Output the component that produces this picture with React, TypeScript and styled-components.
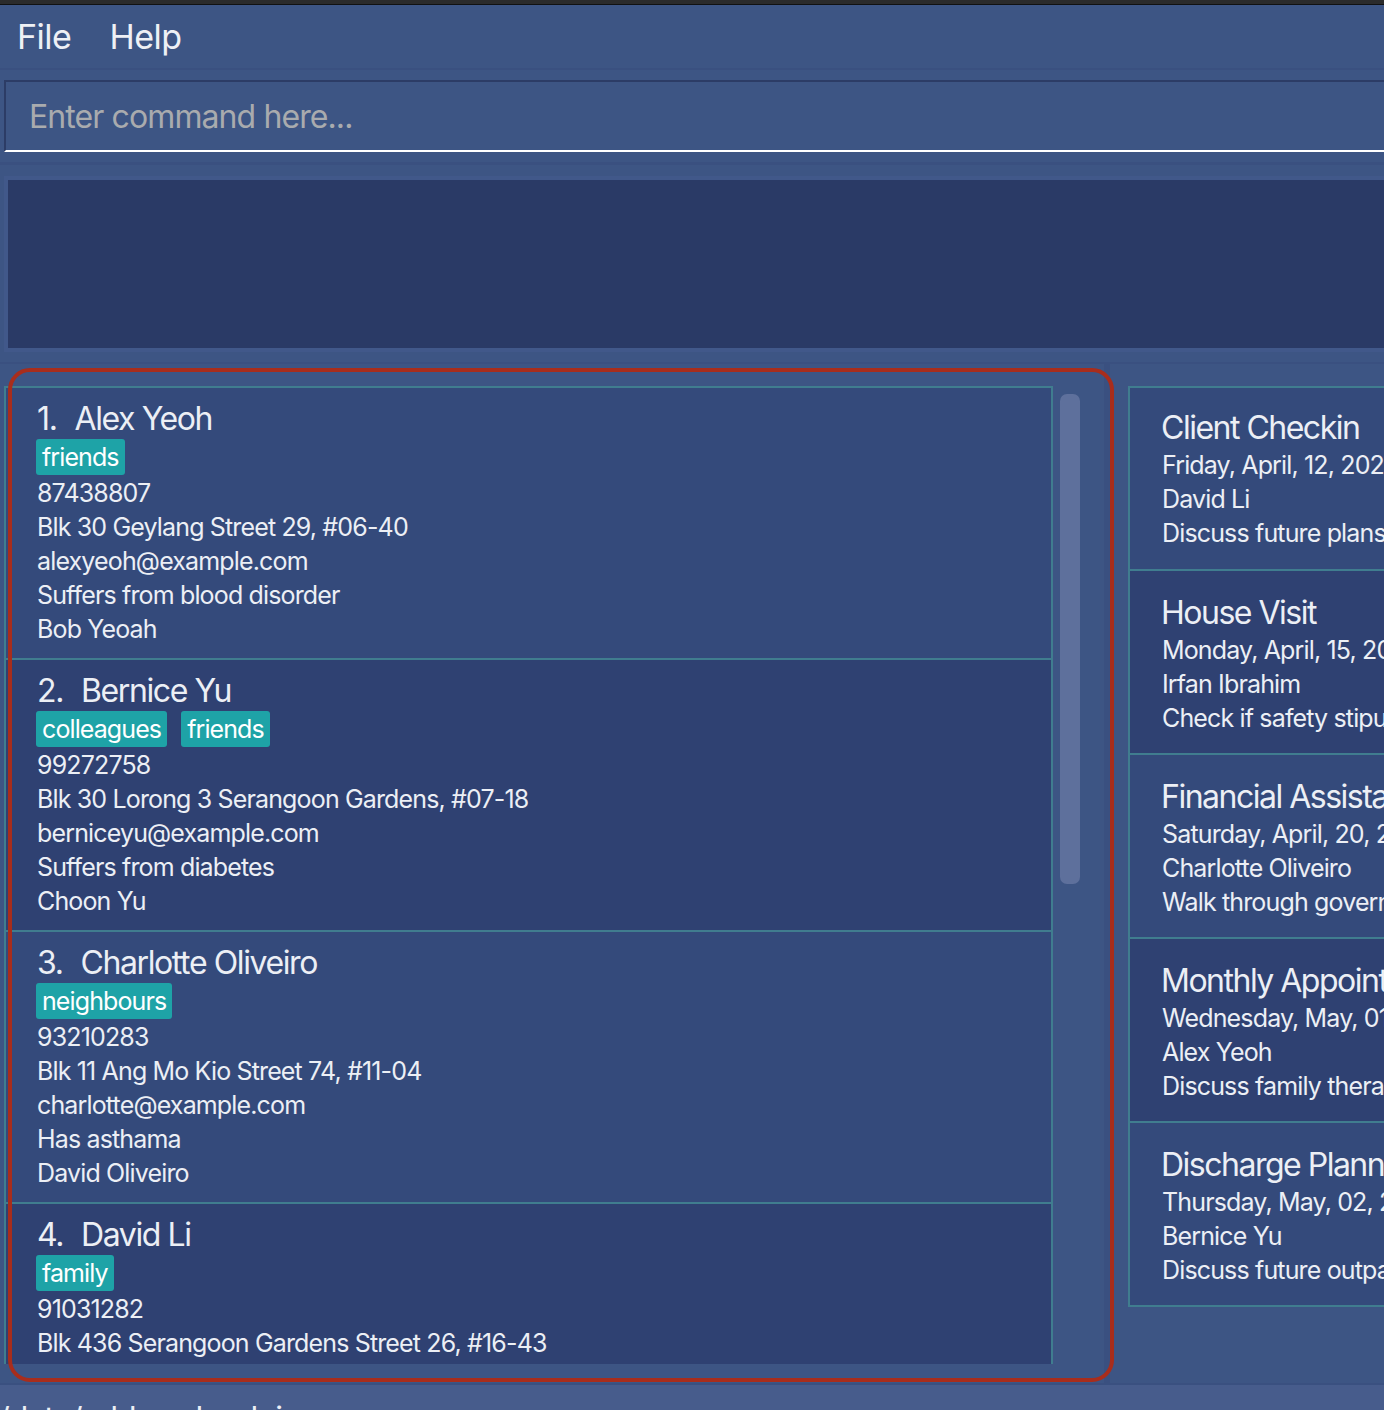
import styled, { createGlobalStyle } from 'styled-components';

const GlobalStyle = createGlobalStyle`
  html, body {
    margin: 0;
    padding: 0;
    width: 1384px;
    height: 1410px;
    overflow: hidden;
    background: #3d5584;
  }
  * { box-sizing: border-box; }
`;

type Person = {
  id: number;
  name: string;
  tags: string[];
  phone: string;
  address: string;
  email: string;
  note: string;
  contact: string;
};

type Appointment = {
  title: string;
  date: string;
  person: string;
  description: string;
};

const persons: Person[] = [
  { id: 1, name: 'Alex Yeoh', tags: ['friends'], phone: '87438807', address: 'Blk 30 Geylang Street 29, #06-40', email: 'alexyeoh@example.com', note: 'Suffers from blood disorder', contact: 'Bob Yeoah' },
  { id: 2, name: 'Bernice Yu', tags: ['colleagues', 'friends'], phone: '99272758', address: 'Blk 30 Lorong 3 Serangoon Gardens, #07-18', email: 'berniceyu@example.com', note: 'Suffers from diabetes', contact: 'Choon Yu' },
  { id: 3, name: 'Charlotte Oliveiro', tags: ['neighbours'], phone: '93210283', address: 'Blk 11 Ang Mo Kio Street 74, #11-04', email: 'charlotte@example.com', note: 'Has asthama', contact: 'David Oliveiro' },
  { id: 4, name: 'David Li', tags: ['family'], phone: '91031282', address: 'Blk 436 Serangoon Gardens Street 26, #16-43', email: 'lidavid@example.com', note: 'Has high blood pressure', contact: 'Alex Yeoh' },
];

const appointments: Appointment[] = [
  { title: 'Client Checkin', date: 'Friday, April, 12, 2024', person: 'David Li', description: 'Discuss future plans' },
  { title: 'House Visit', date: 'Monday, April, 15, 2024', person: 'Irfan Ibrahim', description: 'Check if safety stipulations are met' },
  { title: 'Financial Assistance', date: 'Saturday, April, 20, 2024', person: 'Charlotte Oliveiro', description: 'Walk through government schemes' },
  { title: 'Monthly Appointment', date: 'Wednesday, May, 01, 2024', person: 'Alex Yeoh', description: 'Discuss family therapy' },
  { title: 'Discharge Planning', date: 'Thursday, May, 02, 2024', person: 'Bernice Yu', description: 'Discuss future outpatient care' },
];

function App() {
  return (
    <>
      <GlobalStyle />
      <Window>
        <TopStrip />
        <MenuBar>
          <MenuItem>File</MenuItem>
          <MenuItem>Help</MenuItem>
        </MenuBar>
        <CommandArea>
          <CommandInput placeholder="Enter command here..." />
        </CommandArea>
        <ResultArea>
          <ResultPane />
        </ResultArea>
        <MainSplit>
          <PersonPanel>
            <PersonViewport>
              {persons.map((p) => (
                <PersonCard key={p.id} $odd={p.id % 2 === 1}>
                  <NameRow>
                    <span>{p.id}.</span>
                    <span>{p.name}</span>
                  </NameRow>
                  <TagRow>
                    {p.tags.map((t) => (
                      <Tag key={t}>{t}</Tag>
                    ))}
                  </TagRow>
                  <Detail>{p.phone}</Detail>
                  <Detail>{p.address}</Detail>
                  <Detail>{p.email}</Detail>
                  <Detail>{p.note}</Detail>
                  <Detail>{p.contact}</Detail>
                </PersonCard>
              ))}
            </PersonViewport>
            <ScrollTrack>
              <ScrollThumb />
            </ScrollTrack>
          </PersonPanel>
          <Divider />
          <AppointmentPanel>
            {appointments.map((a, i) => (
              <AppointmentCard key={a.title} $odd={i % 2 === 0} $first={i === 0}>
                <CardTitle>{a.title}</CardTitle>
                <Detail>{a.date}</Detail>
                <Detail>{a.person}</Detail>
                <Detail>{a.description}</Detail>
              </AppointmentCard>
            ))}
          </AppointmentPanel>
          <Highlight />
        </MainSplit>
        <StatusBar>./data/addressbook.json</StatusBar>
      </Window>
    </>
  );
}

const Window = styled.div`
  width: 1700px;
  height: 1410px;
  display: flex;
  flex-direction: column;
  background: #3d5584;
  font-family: Inter, "Noto Sans", sans-serif;
  color: #eceff5;
  & > * {
    flex-shrink: 0;
  }
`;

const TopStrip = styled.div`
  height: 5px;
  background: #2b2b2b;
  border-bottom: 1px solid #111111;
`;

const MenuBar = styled.div`
  height: 65px;
  display: flex;
  align-items: center;
  gap: 38px;
  padding-left: 17px;
  border-bottom: 2px solid #3a5080;
`;

const MenuItem = styled.div`
  font-size: 34px;
  letter-spacing: -0.5px;
  color: #eef0f5;
`;

const CommandArea = styled.div`
  padding: 10px 0 0 4px;
`;

const CommandInput = styled.input`
  display: block;
  width: 100%;
  height: 72px;
  background: #3d5584;
  border: none;
  border-top: 2px solid #2c3c66;
  border-left: 2px solid #2c3c66;
  border-bottom: 2px solid #ffffff;
  padding: 0 0 0 23px;
  font-family: Inter, "Noto Sans", sans-serif;
  font-size: 32px;
  letter-spacing: -0.9px;
  color: #ffffff;
  outline: none;
  &::placeholder {
    color: #a9abae;
  }
`;

const ResultArea = styled.div`
  height: 210px;
  padding: 10px 0 0 4px;
  display: flex;
  flex-direction: column;
  &::before {
    content: '';
    display: block;
    height: 3px;
    background: #3a5080;
    margin: 0 0 11px -4px;
  }
`;

const ResultPane = styled.div`
  height: 176px;
  background: #2a3a66;
  border: 4px solid #41588a;
`;

const MainSplit = styled.div`
  position: relative;
  height: 1023px;
  display: flex;
  overflow: hidden;
  border-top: 2px solid #3a5080;
  border-bottom: 2px solid #3a5080;
`;

const PersonPanel = styled.div`
  width: 1104px;
  display: flex;
  align-items: flex-start;
  padding: 22px 0 0 4px;
`;

const PersonViewport = styled.div`
  width: 1049px;
  height: 978px;
  overflow: hidden;
  border-top: 2px solid #407d8f;
  border-left: 2px solid #407d8f;
`;

const PersonCard = styled.div<{ $odd: boolean }>`
  height: 272px;
  padding: 11px 0 0 30px;
  background: ${(p) => (p.$odd ? '#344a7b' : '#2f4172')};
  border-bottom: 2px solid #407d8f;
  border-right: 2px solid #407d8f;
`;

const NameRow = styled.div`
  display: flex;
  gap: 18px;
  padding-left: 1px;
  font-size: 32px;
  line-height: 40px;
  letter-spacing: -1.4px;
`;

const TagRow = styled.div`
  display: flex;
  gap: 14px;
  height: 36px;
  margin-bottom: 1px;
`;

const Tag = styled.span`
  display: inline-flex;
  align-items: center;
  height: 36px;
  padding: 0 6px;
  background: #1ea3a7;
  border-radius: 3px;
  font-size: 25px;
  letter-spacing: -0.9px;
  color: #ffffff;
`;

const Detail = styled.div`
  font-size: 25px;
  line-height: 34px;
  letter-spacing: -0.85px;
  padding-left: 1px;
  white-space: nowrap;
`;

const ScrollTrack = styled.div`
  width: 51px;
  padding: 8px 0 0 7px;
`;

const ScrollThumb = styled.div`
  width: 20px;
  height: 490px;
  border-radius: 7px;
  background: #5e709c;
`;

const Divider = styled.div`
  width: 6px;
  background: #3a5080;
`;

const AppointmentPanel = styled.div`
  flex: 1;
  padding: 22px 0 0 18px;
  display: flex;
  flex-direction: column;
`;

const AppointmentCard = styled.div<{ $odd: boolean; $first: boolean }>`
  height: ${(p) => (p.$first ? '185px' : '184px')};
  flex-shrink: 0;
  padding: ${(p) => (p.$first ? '20px' : '22px')} 0 0 31px;
  background: ${(p) => (p.$odd ? '#344a7b' : '#2f4172')};
  border: 2px solid #407d8f;
  border-top-width: ${(p) => (p.$first ? '2px' : '0')};
`;

const CardTitle = styled.div`
  font-size: 32px;
  line-height: 40px;
  letter-spacing: -1.5px;
  white-space: nowrap;
`;

const Highlight = styled.div`
  position: absolute;
  left: 8px;
  top: 4px;
  width: 1106px;
  height: 1014px;
  border: 4px solid #a82d1c;
  border-radius: 22px;
  pointer-events: none;
`;

const StatusBar = styled.div`
  height: 40px;
  background: #475c8c;
  font-size: 32px;
  line-height: 40px;
  letter-spacing: -1px;
  padding-top: 14px;
  text-indent: -10px;
  white-space: nowrap;
`;

export default App;
